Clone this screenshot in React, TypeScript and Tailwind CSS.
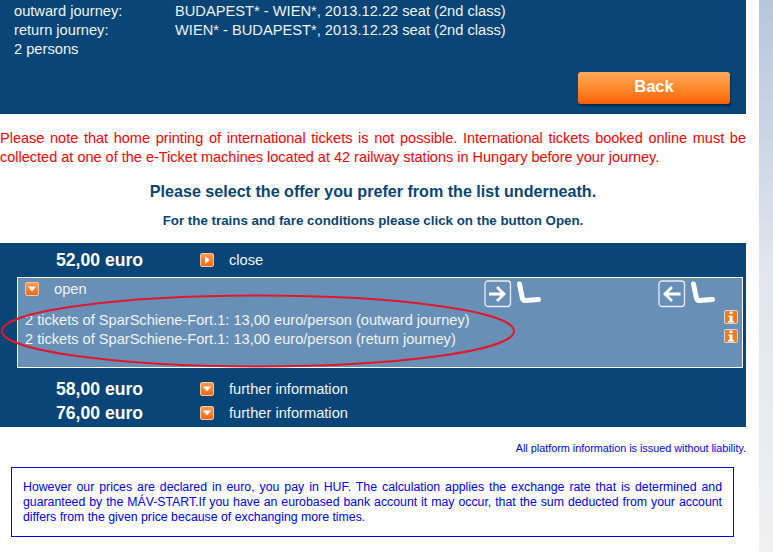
const Sq = ({ dir }: { dir: "down" | "right" }) => (
  <span className="flex h-[14px] w-[14px] shrink-0 items-center justify-center rounded-[2px] border border-[#f5c9a0] bg-gradient-to-b from-[#fb9a4a] to-[#f06a14]">
    <svg width="10" height="10" viewBox="0 0 10 10">
      {dir === "down" ? <path d="M1 2.5h8L5 7.5z" fill="#fff" /> : <path d="M3 1v8l4.5-4z" fill="#fff" />}
    </svg>
  </span>
);

const Info = () => (
  <span className="flex h-[14px] w-[14px] items-center justify-center rounded-[2px] border border-[#d8d8d8] bg-[#f07a20]">
    <svg width="8" height="12" viewBox="0 0 8 12">
      <rect x="2.5" y="0.5" width="3" height="2.5" fill="#fff" />
      <path d="M1.5 4.5h4v5.5h1.5v1.5H1v-1.5h1.5V6H1.5z" fill="#fff" />
    </svg>
  </span>
);

const Arrow = ({ left }: { left?: boolean }) => (
  <svg width="28" height="28" viewBox="0 0 28 28" className="shrink-0">
    <rect x="1" y="1" width="25.5" height="25.5" rx="3" fill="none" stroke="#e8edf3" strokeWidth="1.3" />
    <path
      d={left ? "M22.5 14H7M14 7l-7 7 7 7" : "M5 14h15.5M13 7l7 7-7 7"}
      fill="none"
      stroke="#fff"
      strokeWidth="2.8"
    />
  </svg>
);

const Seat = () => (
  <svg width="26" height="26" viewBox="0 0 26 26" className="shrink-0">
    <path d="M3.5 4 L6.5 18.5 Q7 20.5 9 20.5 L22.5 19.5" fill="none" stroke="#fff" strokeWidth="5" strokeLinecap="round" strokeLinejoin="round" />
  </svg>
);

const Row = ({ price, label, dir = "down" }: { price: string; label: string; dir?: "down" | "right" }) => (
  <div className="flex h-6 items-center">
    <span className="w-[200px] pl-[56px] text-[17.6px] font-bold whitespace-nowrap text-white">{price}</span>
    <span className="flex w-[29px]">
      <Sq dir={dir} />
    </span>
    <span className="text-[14.67px] text-[#f0f4f8]">{label}</span>
  </div>
);

export default function App() {
  return (
    <div
      className="relative flex h-[552px] w-[773px] overflow-hidden bg-white text-[14.67px]"
      style={{ fontFamily: '"Liberation Sans", Arial, sans-serif' }}
    >
      <main className="w-[746px] shrink-0">
        <section className="flex h-[114px] flex-col bg-[#0a4577] pl-[14px] pr-4 leading-[19px] text-[#eef3f8]">
          <div className="flex pt-[2px]">
            <span className="w-[161px]">outward journey:</span>
            <span>BUDAPEST* - WIEN*, 2013.12.22 seat (2nd class)</span>
          </div>
          <div className="flex">
            <span className="w-[161px]">return journey:</span>
            <span>WIEN* - BUDAPEST*, 2013.12.23 seat (2nd class)</span>
          </div>
          <div>2 persons</div>
          <div className="mt-[13px] flex justify-end">
            <button className="h-8 w-[152px] rounded-[3px] bg-gradient-to-b from-[#ffa85c] via-[#ff8a2a] to-[#f95f06] pb-[4px] text-[16.5px] font-bold text-white shadow-[1px_2px_1px_#062c4d]">
              Back
            </button>
          </div>
        </section>

        <p className="mt-[15px] text-justify text-[14.5px] leading-[19px] text-[#ff0000]">
          Please note that home printing of international tickets is not possible. International tickets booked online must be collected at one of the e-Ticket machines located at 42 railway stations in Hungary before your journey.
        </p>
        <h2 className="mt-[14px] text-center text-[16.1px] leading-5 font-bold text-[#0a4577]">
          Please select the offer you prefer from the list underneath.
        </h2>
        <p className="mt-[11px] text-center text-[13.33px] leading-[18px] font-bold text-[#0a4577]">
          For the trains and fare conditions please click on the button Open.
        </p>

        <section className="mt-[13px] h-[184px] bg-[#0a4577] pt-[5px]">
          <Row price="52,00 euro" label="close" dir="right" />
          <div className="mt-[5px] ml-[17px] flex h-[91px] w-[726px] border border-white bg-[#6890b6] text-[#f0f4f8]">
            <div className="flex w-[456px] shrink-0 flex-col pl-[7px]">
              <div className="flex h-[22px] items-center">
                <Sq dir="down" />
                <span className="ml-[15px]">open</span>
              </div>
              <div className="mt-[11px] text-[14.6px] leading-[19px] whitespace-nowrap">
                <div>2 tickets of SparSchiene-Fort.1: 13,00 euro/person (outward journey)</div>
                <div>2 tickets of SparSchiene-Fort.1: 13,00 euro/person (return journey)</div>
              </div>
            </div>
            <div className="flex w-[184px] shrink-0 items-start gap-[4px] pl-[10px] pt-[2px]">
              <Arrow />
              <Seat />
            </div>
            <div className="flex shrink-0 items-start gap-[4px] pt-[2px]">
              <Arrow left />
              <Seat />
            </div>
            <div className="ml-[8px] flex flex-col gap-[5px] pt-[32px]">
              <Info />
              <Info />
            </div>
          </div>
          <div className="mt-[9px]">
            <Row price="58,00 euro" label="further information" />
            <Row price="76,00 euro" label="further information" />
          </div>
        </section>

        <p className="mt-[14px] text-right text-[10.8px] leading-[14px] text-[#0000ff]">
          All platform information is issued without liability.
        </p>
        <div className="mt-[12px] ml-[11px] h-[70px] w-[723px] border border-[#0000ff] px-[11px] pt-[12px] text-justify text-[12.3px] leading-[15px] text-[#0000ff]">
          However our prices are declared in euro, you pay in HUF. The calculation applies the exchange rate that is determined and guaranteed by the MÁV-START.If you have an eurobased bank account it may occur, that the sum deducted from your account differs from the given price because of exchanging more times.
        </div>
      </main>
      <aside className="ml-[13px] h-full flex-1 bg-gradient-to-b from-[#b5c7dc] via-[#e2e6ee] to-[#f0f0f0]" />

      <svg className="pointer-events-none absolute top-[289px] left-0" width="520" height="80" viewBox="0 0 520 80">
        <ellipse cx="258" cy="42" rx="256" ry="35.5" fill="none" stroke="#e0182c" strokeWidth="2" />
      </svg>
    </div>
  );
}
